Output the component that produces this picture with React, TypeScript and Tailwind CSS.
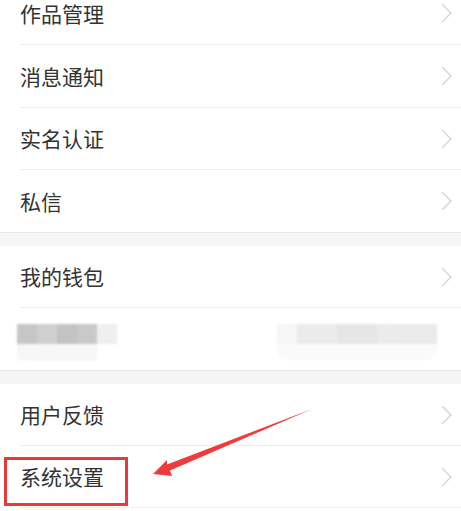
import React from "react";

const Chevron = () => (
  <svg width="12" height="20" viewBox="0 0 12 20" className="shrink-0">
    <path d="M1.5 1.5 L10 10 L1.5 18.5" fill="none" stroke="#d2d2d2" strokeWidth="1.3" strokeLinecap="round" strokeLinejoin="round" />
  </svg>
);

const Row = ({ label, divider = true, h = "h-[63px]" }: { label: string; divider?: boolean; h?: string }) => (
  <div className="pl-5">
    <div className={`${h} flex items-center justify-between pr-[8px] ${divider ? "border-b border-[#ececec]" : ""}`}>
      <span className="text-[21px] text-[#333333] leading-none" style={{ fontFamily: '"Noto Sans CJK SC", "Noto Sans", sans-serif' }}>
        {label}
      </span>
      <Chevron />
    </div>
  </div>
);

const Gap = () => <div className="h-[14px] bg-[#f4f5f5] border-t border-[#e9e9e9]" />;

export default function App() {
  return (
    <div className="w-[461px] h-[511px] overflow-hidden bg-white relative">
      <div className="-mt-[18px]">
        <div className="bg-white">
          <Row label="作品管理" />
          <Row label="消息通知" />
          <Row label="实名认证" h="h-[62px]" />
          <Row label="私信" divider={false} h="h-[62px]" />
        </div>
        <Gap />
        <div className="bg-white">
          <Row label="我的钱包" h="h-[62px]" />
          <div className="h-[62px] flex items-start pt-[16px] justify-between pl-[17px] pr-[24px]">
            <div className="flex flex-col blur-[1px]">
              <div className="flex h-[20px]">
                <div className="w-[20px] bg-[#c6c6c6]" />
                <div className="w-[20px] bg-[#cfcfcf]" />
                <div className="w-[20px] bg-[#c3c3c3]" />
                <div className="w-[20px] bg-[#c9c9c9]" />
                <div className="w-[20px] bg-[#efefef]" />
              </div>
              <div className="flex h-[17px]">
                <div className="w-[80px] bg-[#f7f7f7] rounded-bl-[6px]" />
              </div>
            </div>
            <div className="flex flex-col blur-[1px]">
              <div className="flex h-[20px]">
                <div className="w-[20px] bg-[#f6f6f6]" />
                <div className="w-[40px] bg-[#ebebeb]" />
                <div className="w-[40px] bg-[#e6e6e6]" />
                <div className="w-[20px] bg-[#ebebeb]" />
                <div className="w-[40px] bg-[#eaeaea]" />
              </div>
              <div className="h-[16px] w-[160px] bg-[#fafafa] rounded-b-[10px]" />
            </div>
          </div>
        </div>
        <Gap />
        <div className="bg-white">
          <Row label="用户反馈" h="h-[62px]" />
          <Row label="系统设置" h="h-[62px]" />
        </div>
      </div>
      {/* annotation box */}
      <div className="absolute left-[4px] top-[457px] w-[124px] h-[49px] border-[3px] border-[#e53b3d]" />
      {/* annotation arrow */}
      <svg className="absolute left-0 top-0" width="461" height="511" viewBox="0 0 461 511">
        <polygon
          points="312,409 170,470.5 172,476 153,474 167,460 167,464.5"
          fill="#ef3b3b"
        />
      </svg>
    </div>
  );
}
